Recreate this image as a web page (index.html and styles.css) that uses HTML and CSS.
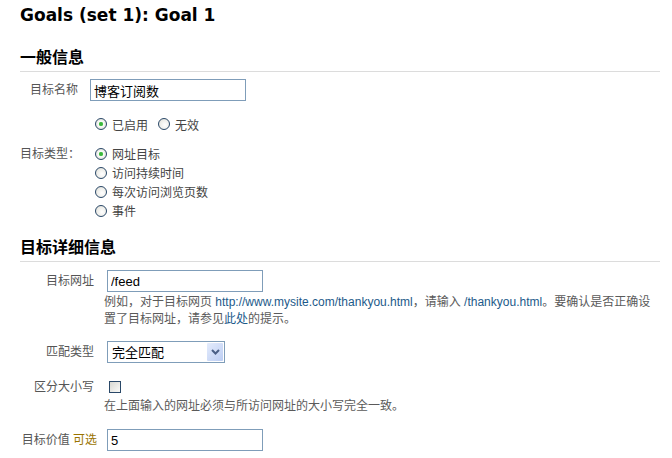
FILE: index.html
```html
<!DOCTYPE html>
<html>
<head>
  <meta charset="utf-8">
  <title>Goals (set 1): Goal 1</title>
  <link rel="stylesheet" href="styles.css">
</head>
<body>
  <div class="page">
    <h1>Goals (set 1): Goal 1</h1>

    <!-- 一般信息 -->
    <h2>一般信息</h2>
    <div class="secao geral">
      <div class="linha nome">
        <label class="rotulo" for="nome">目标名称</label>
        <input type="text" id="nome" class="campo" value="博客订阅数">
      </div>

      <div class="linha estado">
        <span class="rotulo"></span>
        <div class="opcoes-inline">
          <label class="opcao"><input type="radio" name="estado" checked>已启用</label>
          <label class="opcao"><input type="radio" name="estado">无效</label>
        </div>
      </div>

      <div class="linha tipo">
        <span class="rotulo esquerda">目标类型：</span>
        <div class="opcoes">
          <label class="opcao"><input type="radio" name="tipo" checked>网址目标</label>
          <label class="opcao"><input type="radio" name="tipo">访问持续时间</label>
          <label class="opcao"><input type="radio" name="tipo">每次访问浏览页数</label>
          <label class="opcao"><input type="radio" name="tipo">事件</label>
        </div>
      </div>
    </div>

    <!-- 目标详细信息 -->
    <h2 class="detalhe">目标详细信息</h2>
    <div class="secao detalhes">
      <div class="linha url">
        <label class="rotulo" for="url">目标网址</label>
        <div>
          <input type="text" id="url" class="campo" value="/feed">
          <p class="ajuda">例如，对于目标网页 <a href="#">http://www.mysite.com/thankyou.html</a>，请输入 <a href="#">/thankyou.html</a>。要确认是否正确设<br>置了目标网址，请参见<a href="#">此处</a>的提示。</p>
        </div>
      </div>

      <div class="linha tipo-match">
        <label class="rotulo" for="match">匹配类型</label>
        <div class="seletor">
          <select id="match">
            <option>完全匹配</option>
            <option>标题匹配</option>
            <option>正则表达式匹配</option>
          </select>
          <span class="seta">
            <svg width="9" height="6" viewBox="0 0 9 6"><path d="M1 1 L4.5 4.5 L8 1" fill="none" stroke="#4a5f86" stroke-width="2"/></svg>
          </span>
        </div>
      </div>

      <div class="linha caixa">
        <label class="rotulo" for="maiusc">区分大小写</label>
        <div>
          <input type="checkbox" id="maiusc" class="marcar">
          <p class="ajuda">在上面输入的网址必须与所访问网址的大小写完全一致。</p>
        </div>
      </div>

      <div class="linha valor">
        <label class="rotulo" for="valor">目标价值 <span class="opcional">可选</span></label>
        <input type="text" id="valor" class="campo" value="5">
      </div>
    </div>
  </div>
</body>
</html>
```

FILE: styles.css
```css
body {
  margin: 0;
  background-color: #fff;
  font-family: "Liberation Sans", "Noto Sans CJK SC", sans-serif;
  font-size: 12px;
  color: #444;
}

.page {
  padding: 5px 12px 0 20px;
}

h1 {
  margin: 0;
  font-family: "DejaVu Sans", "Liberation Sans", sans-serif;
  font-size: 17px;
  line-height: 20px;
  color: #000;
}

h2 {
  margin: 23px 0 0;
  padding-bottom: 3px;
  font-size: 16px;
  line-height: 20px;
  color: #000;
  border-bottom: 1px solid #dcdcdc;
}

h2.detalhe {
  margin-top: 18px;
}

.linha {
  display: flex;
  align-items: flex-start;
}

.rotulo {
  flex-shrink: 0;
  text-align: right;
  line-height: 22px;
  white-space: nowrap;
  color: #555;
}

.geral .rotulo {
  width: 58px;
  margin-right: 12px;
}

.geral .rotulo.esquerda {
  width: 62px;
  margin-right: 8px;
  text-align: left;
  line-height: 21px;
}

.detalhes .rotulo {
  width: 74px;
  margin-right: 13px;
}

.detalhes .valor .rotulo {
  width: 77px;
  margin-right: 10px;
}

.campo {
  box-sizing: border-box;
  width: 156px;
  height: 22px;
  margin: 0;
  padding: 2px 3px;
  border: 1px solid #7f9db9;
  font-family: "Liberation Sans", "Noto Sans CJK SC", sans-serif;
  font-size: 13px;
  color: #000;
}

.nome {
  margin-top: 7px;
}

.estado {
  margin-top: 13px;
}

.tipo {
  margin-top: 10px;
}

.opcoes-inline {
  display: flex;
  gap: 10px;
  padding-left: 5px;
}

.opcoes {
  display: flex;
  flex-direction: column;
  padding-left: 5px;
}

.opcao {
  display: flex;
  align-items: center;
  height: 19px;
  color: #444;
}

.estado .opcao {
  height: 20px;
}

.opcao input[type="radio"] {
  appearance: none;
  box-sizing: border-box;
  width: 12px;
  height: 12px;
  margin: 0 5px 0 0;
  border: 1px solid #2a4868;
  border-radius: 50%;
  background: radial-gradient(circle at 60% 60%, #ffffff 0, #eeeeea 55%, #d6d6ce 100%);
}

.opcao input[type="radio"]:checked {
  background: radial-gradient(circle, #2fae2f 0, #4cc14c 1.8px, #ffffff 2.6px, #eeeeea 55%, #d6d6ce 100%);
}

.url {
  margin-top: 8px;
}

.ajuda {
  margin: 2px 0 0 -3px;
  line-height: 17px;
  color: #5a5a5a;
  white-space: nowrap;
}

.ajuda a {
  color: #1c5a8a;
  text-decoration: none;
}

.tipo-match {
  margin-top: 13px;
}

.seletor {
  position: relative;
  width: 118px;
  height: 22px;
}

.seletor select {
  appearance: none;
  box-sizing: border-box;
  width: 118px;
  height: 22px;
  margin: 0;
  padding: 0 0 0 4px;
  border: 1px solid #7f9db9;
  border-radius: 0;
  background: #fff;
  font-family: "Liberation Sans", "Noto Sans CJK SC", sans-serif;
  font-size: 13px;
  color: #000;
}

.seta {
  position: absolute;
  top: 2px;
  right: 2px;
  width: 16px;
  height: 18px;
  display: flex;
  align-items: center;
  justify-content: center;
  background: linear-gradient(135deg, #e4ecfc, #bccdf3);
  border-radius: 1px;
  pointer-events: none;
}

.caixa {
  margin-top: 14px;
}

.caixa .rotulo {
  line-height: 20px;
}

.marcar {
  appearance: none;
  box-sizing: border-box;
  display: block;
  width: 12px;
  height: 12px;
  margin: 4px 0 0 2px;
  border: 1px solid #2a4868;
  background: linear-gradient(135deg, #d8d8d2, #fafaf8);
}

.caixa .ajuda {
  margin-top: 5px;
}

.valor {
  margin-top: 14px;
}

.opcional {
  color: #9a7400;
}
```
